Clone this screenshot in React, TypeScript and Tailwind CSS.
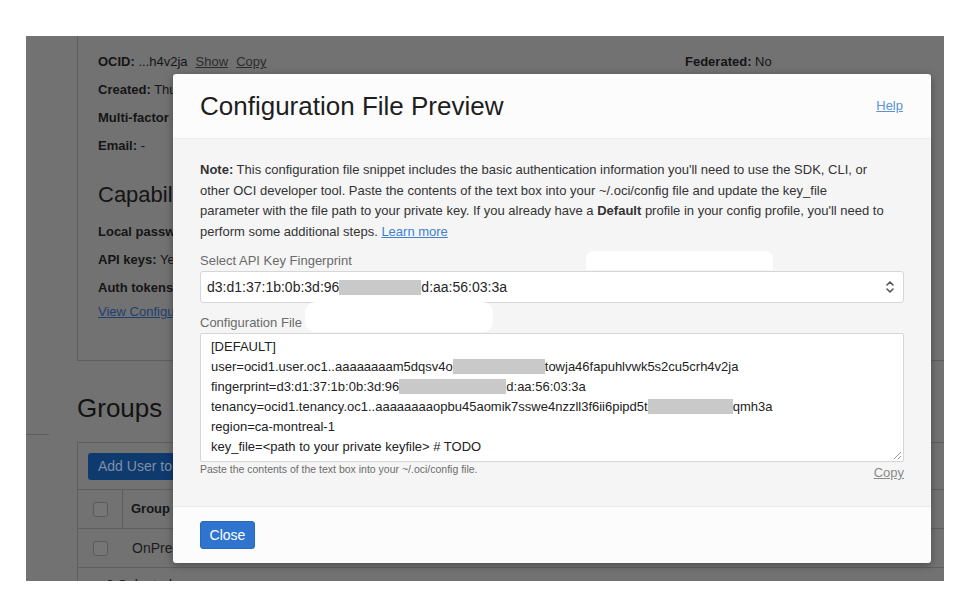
const FONT = { fontFamily: '"Liberation Sans", Arial, Helvetica, sans-serif' };

function Redact({ w }: { w: number }) {
  return <span className="inline-block h-[15px] bg-[#c9c9c9] align-[-3px]" style={{ width: w }} />;
}

function Checkbox() {
  return <div className="w-[15px] h-[15px] rounded-[3px] border border-[#5a5a5a] bg-[#767676]" />;
}

export default function App() {
  return (
    <div className="w-[976px] h-[612px] bg-white pt-[36px] pl-[26px]" style={FONT}>
      <div className="relative w-[918px] h-[545px] bg-[#727272] overflow-hidden flex">
        {/* sidebar */}
        <aside className="w-[51px] shrink-0 pt-[398px]">
          <div className="w-[23px] h-px bg-[#5e5e5e]" />
        </aside>

        {/* page under the overlay */}
        <main className="flex-1 text-[#151515] text-[13px]">
          <section className="border-l border-b border-[#5e5e5e] pl-[20px] pt-[12px] pb-[38px]">
            <div className="flex leading-[28px]">
              <div className="w-[587px] flex gap-[8px]">
                <span><b>OCID:</b> ...h4v2ja</span>
                <span className="underline text-[#2c2c2c]">Show</span>
                <span className="underline text-[#2c2c2c]">Copy</span>
              </div>
              <div><b>Federated:</b> No</div>
            </div>
            <div className="leading-[28px]"><b>Created:</b> Thu, Jan 21, 2021, 18:32:14 UTC</div>
            <div className="leading-[28px]"><b>Multi-factor authentication:</b> Disabled</div>
            <div className="leading-[28px]"><b>Email:</b> -</div>
            <h2 className="mt-[21px] text-[22px] leading-[28px] text-[#141414]">Capabilities</h2>
            <div className="mt-[9px] leading-[28px]"><b>Local password:</b> Yes</div>
            <div className="leading-[28px]"><b>API keys:</b> Yes</div>
            <div className="leading-[28px]"><b>Auth tokens:</b> Yes</div>
            <div className="leading-[20px] underline text-[#1f3f70]">View Configuration File</div>
          </section>

          <h2 className="mt-[31px] text-[26px] leading-[32px] text-[#121212]">Groups</h2>

          <section className="mt-[18px] border-l border-t border-[#5e5e5e]">
            <div className="pt-[10px] pl-[10px] pb-[9px]">
              <div className="inline-flex items-center h-[27px] px-[10px] rounded-[3px] bg-[#0f3a6e] text-[#7d8fa8] text-[14px]">
                Add User to Group
              </div>
            </div>
            <div className="flex h-[39px] border-t border-[#5e5e5e]">
              <div className="w-[45px] flex items-center pl-[15px] border-r border-[#5e5e5e]">
                <Checkbox />
              </div>
              <div className="flex items-center pl-[8px] font-bold">Group Name</div>
            </div>
            <div className="flex h-[39px] border-t border-[#5e5e5e]">
              <div className="w-[45px] flex items-center pl-[15px]">
                <Checkbox />
              </div>
              <div className="flex items-center pl-[9px] text-[14px] text-[#1c1c1c]">OnPremGroup</div>
            </div>
            <div className="border-t border-[#5e5e5e] pl-[28px] pt-[7px] text-[14px] text-[#1c1c1c]">0 Selected</div>
          </section>
        </main>

        {/* modal */}
        <div className="absolute left-[147px] top-[38px] w-[758px] h-[489px] bg-[#fcfcfc] rounded-[3px] shadow-[0_2px_8px_rgba(0,0,0,0.35)] flex flex-col overflow-hidden">
          <header className="h-[65px] shrink-0 flex items-center justify-between pl-[27px] pr-[28px] border-b border-[#ececec]">
            <h1 className="text-[26px] leading-[32px] text-[#1e1e1e] font-normal">Configuration File Preview</h1>
            <a className="text-[13px] text-[#5a92d8] underline">Help</a>
          </header>

          <div className="relative h-[367px] shrink-0 bg-[#f5f5f5] px-[27px] pt-[21px]">
            <p className="text-[13px] leading-[20.5px] text-[#333] whitespace-nowrap">
              <b>Note:</b> This configuration file snippet includes the basic authentication information you'll need to use the SDK, CLI, or
              <br />
              other OCI developer tool. Paste the contents of the text box into your ~/.oci/config file and update the key_file
              <br />
              parameter with the file path to your private key. If you already have a <b>Default</b> profile in your config profile, you'll need to
              <br />
              perform some additional steps. <a className="text-[#3f80d2] underline">Learn more</a>
            </p>

            <div className="mt-[11px] text-[13px] leading-[16px] text-[#6a6a6a]">Select API Key Fingerprint</div>
            <div className="mt-[2px] h-[32px] bg-white border border-[#d6d6d6] rounded-[3px] flex items-center justify-between pl-[6px] pr-[8px] text-[14px] text-[#262626]">
              <span className="whitespace-nowrap">
                d3:d1:37:1b:0b:3d:96<Redact w={82} />d:aa:56:03:3a
              </span>
              <svg width="10" height="14" viewBox="0 0 10 14" fill="none" stroke="#555" strokeWidth="1.6" strokeLinecap="round" strokeLinejoin="round">
                <path d="M2 5 L5 2 L8 5" />
                <path d="M2 9 L5 12 L8 9" />
              </svg>
            </div>

            <div className="mt-[12px] text-[13px] leading-[16px] text-[#6a6a6a]">Configuration File</div>
            <div className="relative mt-[2px] h-[129px] bg-white border border-[#d6d6d6] rounded-[2px] pl-[10px] pt-[3px] text-[13px] leading-[20px] text-[#222] whitespace-nowrap">
              <div>[DEFAULT]</div>
              <div>user=ocid1.user.oc1..aaaaaaaam5dqsv4o<Redact w={92} />towja46fapuhlvwk5s2cu5crh4v2ja</div>
              <div>fingerprint=d3:d1:37:1b:0b:3d:96<Redact w={107} />d:aa:56:03:3a</div>
              <div>tenancy=ocid1.tenancy.oc1..aaaaaaaaopbu45aomik7sswe4nzzll3f6ii6pipd5t<Redact w={85} />qmh3a</div>
              <div>region=ca-montreal-1</div>
              <div>key_file=&lt;path to your private keyfile&gt; # TODO</div>
              <svg className="absolute right-[1px] bottom-[1px]" width="9" height="9" viewBox="0 0 9 9" stroke="#9a9a9a" strokeWidth="1">
                <path d="M8 1 L1 8" />
                <path d="M8 5 L5 8" />
              </svg>
            </div>
            <div className="flex justify-between">
              <span className="text-[10.5px] leading-[13px] text-[#6d6d6d] mt-[1px]">
                Paste the contents of the text box into your ~/.oci/config file.
              </span>
              <span className="text-[13px] leading-[16px] text-[#8a8a8a] underline mt-[3px]">Copy</span>
            </div>

            {/* white redaction blobs */}
            <div className="absolute left-[413px] top-[112px] w-[187px] h-[19px] bg-white rounded-t-[8px]" />
            <div className="absolute left-[132px] top-[163px] w-[188px] h-[30px] bg-white rounded-[10px]" />
          </div>

          <footer className="flex-1 flex items-center border-t border-[#ebebeb] pl-[27px]">
            <button className="h-[28px] w-[55px] rounded-[3px] bg-[#2f74cf] border border-[#2a68bb] text-white text-[14px]">
              Close
            </button>
          </footer>
        </div>
      </div>
    </div>
  );
}
